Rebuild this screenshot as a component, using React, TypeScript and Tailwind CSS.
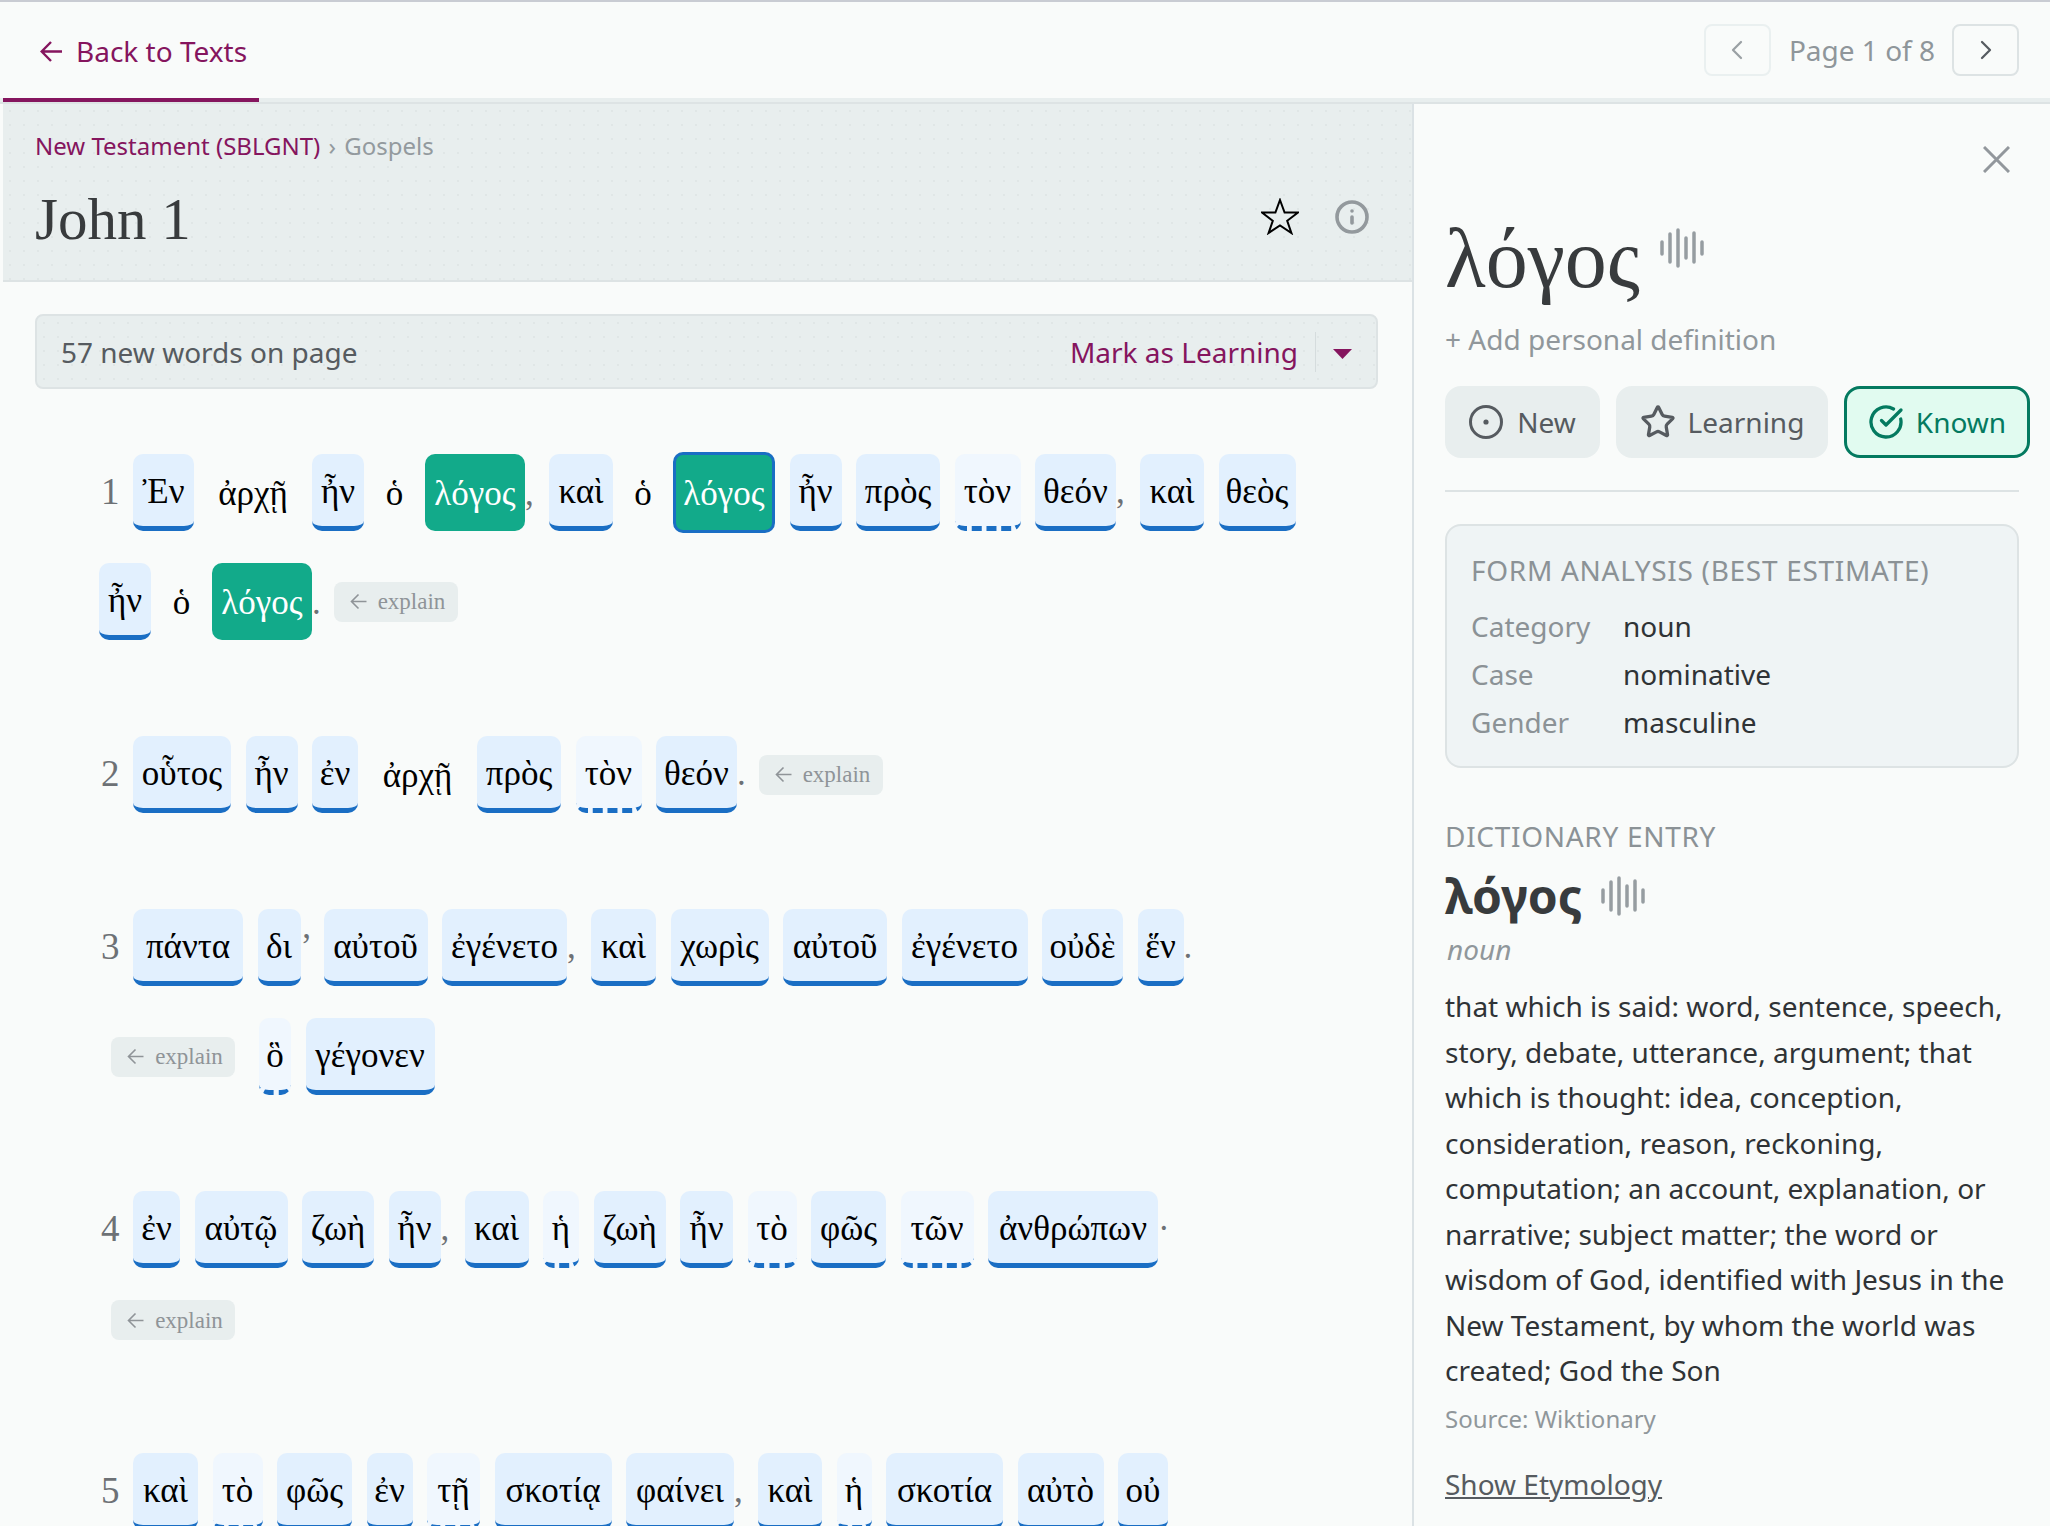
import React from 'react';
import { ChevronLeft, ChevronRight, Info, Star, CircleCheckBig } from 'lucide-react';

type Word = {
  t: string;
  w: string;
  k?: 'known' | 'faint' | 'plain' | 'green' | 'selected';
  p?: string;
  pw?: string;
};

const chipStyles = {
  known: 'h-[77px] rounded-[10px] bg-[#e2f0fe] border-b-[5px] border-[#1a6ec4] text-black',
  faint: 'h-[77px] rounded-[10px] bg-[#f0f7fe] border-b-[5px] border-dashed border-[#1a6ec4] text-black',
  plain: 'h-[77px] text-black',
  green: 'h-[77px] rounded-[10px] bg-[#12aa8a] text-white',
  selected: 'h-[81px] -my-[2px] rounded-[10px] bg-[#12aa8a] border-[3px] border-[#1a6ec4] text-white',
};

const verses: { n: string; words: Word[] }[] = [
  {
    n: '1',
    words: [
      { t: 'Ἐν', w: 'w-[61px]' },
      { t: 'ἀρχῇ', w: 'w-[89px]', k: 'plain' },
      { t: 'ἦν', w: 'w-[52px]' },
      { t: 'ὁ', w: 'w-[32px]', k: 'plain' },
      { t: 'λόγος', w: 'w-[100px]', k: 'green', p: ',', pw: 'w-[9.5px]' },
      { t: 'καὶ', w: 'w-[64px]' },
      { t: 'ὁ', w: 'w-[31px]', k: 'plain' },
      { t: 'λόγος', w: 'w-[102px]', k: 'selected' },
      { t: 'ἦν', w: 'w-[52px]' },
      { t: 'πρὸς', w: 'w-[84px]' },
      { t: 'τὸν', w: 'w-[66px]', k: 'faint' },
      { t: 'θεόν', w: 'w-[81px]', p: ',', pw: 'w-[9.5px]' },
      { t: 'καὶ', w: 'w-[64px]' },
      { t: 'θεὸς', w: 'w-[77px]' },
      { t: 'ἦν', w: 'w-[52px]' },
      { t: 'ὁ', w: 'w-[32px]', k: 'plain' },
      { t: 'λόγος', w: 'w-[100px]', k: 'green', p: '.', pw: 'w-[7px]' },
    ],
  },
  {
    n: '2',
    words: [
      { t: 'οὗτος', w: 'w-[98px]' },
      { t: 'ἦν', w: 'w-[52px]' },
      { t: 'ἐν', w: 'w-[46px]' },
      { t: 'ἀρχῇ', w: 'w-[90px]', k: 'plain' },
      { t: 'πρὸς', w: 'w-[84px]' },
      { t: 'τὸν', w: 'w-[66px]', k: 'faint' },
      { t: 'θεόν', w: 'w-[81px]', p: '.', pw: 'w-[7px]' },
    ],
  },
  {
    n: '3',
    words: [
      { t: 'πάντα', w: 'w-[110px]' },
      { t: 'δι', w: 'w-[43px]', p: '’', pw: 'w-[8.5px]' },
      { t: 'αὐτοῦ', w: 'w-[104px]' },
      { t: 'ἐγένετο', w: 'w-[125px]', p: ',', pw: 'w-[9.5px]' },
      { t: 'καὶ', w: 'w-[65px]' },
      { t: 'χωρὶς', w: 'w-[98px]' },
      { t: 'αὐτοῦ', w: 'w-[104px]' },
      { t: 'ἐγένετο', w: 'w-[126px]' },
      { t: 'οὐδὲ', w: 'w-[81px]' },
      { t: 'ἕν', w: 'w-[46px]', p: '.', pw: 'w-[8px]' },
    ],
  },
  {
    n: '4',
    words: [
      { t: 'ἐν', w: 'w-[47px]' },
      { t: 'αὐτῷ', w: 'w-[93px]' },
      { t: 'ζωὴ', w: 'w-[72px]' },
      { t: 'ἦν', w: 'w-[52px]', p: ',', pw: 'w-[9.5px]' },
      { t: 'καὶ', w: 'w-[64px]' },
      { t: 'ἡ', w: 'w-[36px]', k: 'faint' },
      { t: 'ζωὴ', w: 'w-[72px]' },
      { t: 'ἦν', w: 'w-[53px]' },
      { t: 'τὸ', w: 'w-[49px]', k: 'faint' },
      { t: 'φῶς', w: 'w-[75px]' },
      { t: 'τῶν', w: 'w-[73px]', k: 'faint' },
      { t: 'ἀνθρώπων', w: 'w-[170px]', p: '·', pw: 'w-[8px]' },
    ],
  },
  {
    n: '5',
    words: [
      { t: 'καὶ', w: 'w-[65px]' },
      { t: 'τὸ', w: 'w-[50px]', k: 'faint' },
      { t: 'φῶς', w: 'w-[75px]' },
      { t: 'ἐν', w: 'w-[46px]' },
      { t: 'τῇ', w: 'w-[53px]', k: 'faint' },
      { t: 'σκοτίᾳ', w: 'w-[117px]' },
      { t: 'φαίνει', w: 'w-[108px]', p: ',', pw: 'w-[9.5px]' },
      { t: 'καὶ', w: 'w-[64px]' },
      { t: 'ἡ', w: 'w-[35px]', k: 'faint' },
      { t: 'σκοτία', w: 'w-[117px]' },
      { t: 'αὐτὸ', w: 'w-[86px]' },
      { t: 'οὐ', w: 'w-[50px]' },
    ],
  },
];

const SoundIcon = () => (
  <svg width="44" height="40" viewBox="0 0 44 40" fill="none" stroke="#969da1" strokeWidth="3.5" strokeLinecap="round" className="shrink-0">
    <path d="M2 14v12M10 6v28M18 2v36M26 10v20M34 5v29M42 14v12" />
  </svg>
);

const Explain = ({ className = '' }: { className?: string }) => (
  <div className={`flex h-[40px] w-[124px] items-center justify-center gap-[11px] rounded-[8px] bg-[#e8eeee] pl-[4px] font-['Liberation_Serif',serif] text-[23px] text-[#8f9498] ${className}`}>
    <svg width="17" height="17" viewBox="0 0 17 17" fill="none" stroke="#8f9498" strokeWidth="1.6">
      <path d="M16.5 8.5H1.5M8.5 1.5l-7 7 7 7" />
    </svg>
    <span className="pt-[2px]">explain</span>
  </div>
);

const Chip = ({ word }: { word: Word }) => (
  <div className="flex items-baseline">
    <span className={`flex items-center justify-center whitespace-nowrap pt-[2px] leading-none ${word.w} ${chipStyles[word.k ?? 'known']}`}>
      {word.t}
    </span>
    {word.p && <span className={`text-[#6d7175] ${word.pw}`}>{word.p}</span>}
  </div>
);

const Verse = ({ n, words, children, className = '' }: { n: string; words: Word[]; children?: React.ReactNode; className?: string }) => (
  <div className={`flex flex-wrap items-center gap-x-[14.5px] gap-y-[32px] font-['Liberation_Serif',serif] text-[35px] ${className}`}>
    <span className="w-[19.5px] pb-[2px] pl-[2px] text-[37px] text-[#6d7175]">{n}</span>
    {words.map((w, i) => (
      <Chip key={i} word={w} />
    ))}
    {children}
  </div>
);

const App = () => {
  return (
    <div className="flex h-[1526px] w-full flex-col overflow-hidden border-t-2 border-[#c9ccd3] bg-[#f9fbfa] font-['Noto_Sans',sans-serif]">
      <header className="flex h-[100px] shrink-0 items-center justify-between border-b-4 border-[#e8eeee] pl-[3px] pr-[31px]">
        <a className="-mb-[4px] flex h-[100px] w-[256px] items-center gap-[14px] self-start border-b-4 border-[#85155e] pl-[37px] text-[28px] text-[#85155e]">
          <svg width="22" height="21" viewBox="0 0 22 21" fill="none" stroke="#85155e" strokeWidth="2.4" className="mt-[3px]">
            <path d="M22 10.5H2M11 1 1.7 10.5 11 20" />
          </svg>
          <span className="pt-[1px]">Back to Texts</span>
        </a>
        <div className="flex items-center">
          <button className="flex h-[52px] w-[67px] items-center justify-center rounded-[8px] border-2 border-[#eaf0f0] text-[#9aa0a4]">
            <ChevronLeft size={32} strokeWidth={1.7} />
          </button>
          <span className="ml-[18px] mr-[17px] text-[28px] text-[#8f969a]">Page 1 of 8</span>
          <button className="flex h-[52px] w-[67px] items-center justify-center rounded-[8px] border-2 border-[#dde3e4] text-[#565b60]">
            <ChevronRight size={32} strokeWidth={1.7} />
          </button>
        </div>
      </header>

      <div className="flex min-h-0 flex-1 border-t-2 border-[#dde3e4] pl-[3px]">
        <main className="w-[1409px] shrink-0">
          <div className="flex h-[178px] items-end justify-between border-b-2 border-[#dde3e4] bg-[#e8eeee] bg-[radial-gradient(circle,#dde4e4_0.6px,transparent_1px)] bg-[length:14px_14px] pl-[32px] pr-[44px]">
            <div className="h-full">
              <div className="mt-[25px] text-[24px] leading-[34px] text-[#939a9e]">
                <span className="text-[#85155e]">New Testament (SBLGNT)</span>
                <span className="mx-[2px]"> › </span>Gospels
              </div>
              <h1 className="mt-[21px] font-['Liberation_Serif',serif] text-[59px] leading-[70px] text-[#383b3d]">John 1</h1>
            </div>
            <div className="mb-[45px] flex items-center gap-[36px]">
              <svg width="38" height="37" viewBox="0 0 38 37" fill="none" stroke="#000" strokeWidth="2">
                <path d="M19 2l4.6 12.6H37l-10.8 8.2L30.4 35 19 27.4 7.6 35l4.2-12.2L1 14.6h13.4z" />
              </svg>
              <Info size={36} strokeWidth={2.4} className="-mx-[1.5px] text-[#93999d]" />
            </div>
          </div>

          <div className="pl-[32px] pr-[34px] pt-[32px]">
            <div className="flex h-[75px] items-center justify-between rounded-[8px] border-2 border-[#dde3e4] bg-[#e8eeee] bg-[radial-gradient(circle,#dde4e4_0.6px,transparent_1px)] bg-[length:14px_14px] pl-[24px] pr-[24px]">
              <span className="text-[28px] text-[#565b60]">57 new words on page</span>
              <div className="flex items-center">
                <span className="text-[28px] text-[#85155e]">Mark as Learning</span>
                <span className="ml-[17px] mr-[17px] h-[40px] w-[1px] bg-[#d5dcdd]" />
                <svg width="19" height="10" viewBox="0 0 19 10" fill="#85155e" className="mt-[5px]">
                  <path d="M0 0h19L9.5 10z" />
                </svg>
              </div>
            </div>

            <div className="ml-[64px] mt-[65px] w-[1206px]">
              <Verse n={verses[0].n} words={verses[0].words} className="mb-[96px]">
                <Explain />
              </Verse>
              <Verse n={verses[1].n} words={verses[1].words} className="mb-[96px]">
                <Explain />
              </Verse>
              <Verse n={verses[2].n} words={verses[2].words} className="mb-[96px]">
                <Explain className="ml-[12px] mr-[9.5px]" />
                <Chip word={{ t: 'ὃ', w: 'w-[32px]', k: 'faint' }} />
                <Chip word={{ t: 'γέγονεν', w: 'w-[129px]' }} />
              </Verse>
              <Verse n={verses[3].n} words={verses[3].words} className="mb-[113px]">
                <Explain className="ml-[12px]" />
              </Verse>
              <Verse n={verses[4].n} words={verses[4].words} />
            </div>
          </div>
        </main>

        <aside className="w-[638px] shrink-0 border-l-2 border-[#dbe2e5] pl-[31px] pr-[31px]">
          <div className="mt-[42px] flex justify-end pr-[9px]">
            <svg width="27" height="27" viewBox="0 0 27 27" stroke="#92979c" strokeWidth="3">
              <path d="M1 1l25 25M26 1 1 26" />
            </svg>
          </div>

          <div className="mt-[43px] flex h-[96px] items-start gap-[20px]">
            <span className="font-['Liberation_Serif',serif] text-[84px] leading-[86px] text-[#383b3d]">λόγος</span>
            <div className="mt-[12px]">
              <SoundIcon />
            </div>
          </div>
          <div className="mt-[7px] text-[28px] leading-[40px] text-[#90979b]">+ Add personal definition</div>

          <div className="mt-[27px] flex gap-[16px]">
            <button className="flex h-[72px] w-[155px] shrink-0 items-center justify-center gap-[14px] rounded-[16px] bg-[#e8eeee] text-[28px] text-[#565b60]">
              <svg width="34" height="34" viewBox="0 0 34 34" fill="none" stroke="#565b60" strokeWidth="3">
                <circle cx="17" cy="17" r="15.5" />
                <circle cx="17" cy="17" r="2.6" fill="#565b60" stroke="none" />
              </svg>
              New
            </button>
            <button className="flex h-[72px] w-[212px] shrink-0 items-center justify-center gap-[12px] rounded-[16px] bg-[#e8eeee] text-[28px] text-[#565b60]">
              <Star size={36} strokeWidth={2.2} />
              Learning
            </button>
            <button className="flex h-[72px] w-[186px] shrink-0 items-center justify-center gap-[12px] rounded-[16px] border-[3.5px] border-[#047a60] bg-[#e1fbf0] text-[28px] text-[#047a60]">
              <CircleCheckBig size={36} strokeWidth={2.2} />
              Known
            </button>
          </div>

          <div className="mt-[32px] h-[2px] bg-[#dde3e4]" />

          <div className="mt-[32px] h-[244px] rounded-[16px] border-2 border-[#dde3e4] bg-[#eff4f5] pl-[24px] pt-[24px]">
            <div className="text-[28px] uppercase leading-[40px] tracking-wide text-[#8b9296]">Form Analysis (Best Estimate)</div>
            <div className="mt-[16px] grid grid-cols-[152px_1fr] gap-y-[8px] text-[28px] leading-[40px]">
              <span className="text-[#8b9296]">Category</span>
              <span className="text-[#2f3336]">noun</span>
              <span className="text-[#8b9296]">Case</span>
              <span className="text-[#2f3336]">nominative</span>
              <span className="text-[#8b9296]">Gender</span>
              <span className="text-[#2f3336]">masculine</span>
            </div>
          </div>

          <div className="mt-[48px] text-[28px] uppercase leading-[40px] tracking-wide text-[#8b9296]">Dictionary Entry</div>
          <div className="mt-[10px] flex h-[60px] items-center gap-[19px]">
            <span className="text-[48px] font-bold leading-[60px] text-[#383b3d]">λόγος</span>
            <SoundIcon />
          </div>
          <div className="mt-[3px] pl-[2px] text-[28px] italic leading-[40px] text-[#90979b]">noun</div>
          <p className="mt-[15px] text-[28px] leading-[45.5px] text-[#2f3336]">
            that which is said: word, sentence, speech, story, debate, utterance, argument; that which is thought: idea, conception, consideration, reason, reckoning, computation; an account, explanation, or narrative; subject matter; the word or wisdom of God, identified with Jesus in the New Testament, by whom the world was created; God the Son
          </p>
          <div className="mt-[8px] text-[24px] leading-[34px] text-[#90979b]">Source: Wiktionary</div>
          <a className="mt-[28px] block text-[28px] leading-[40px] text-[#565b60] underline">Show Etymology</a>
        </aside>
      </div>
    </div>
  );
};

export default App;
